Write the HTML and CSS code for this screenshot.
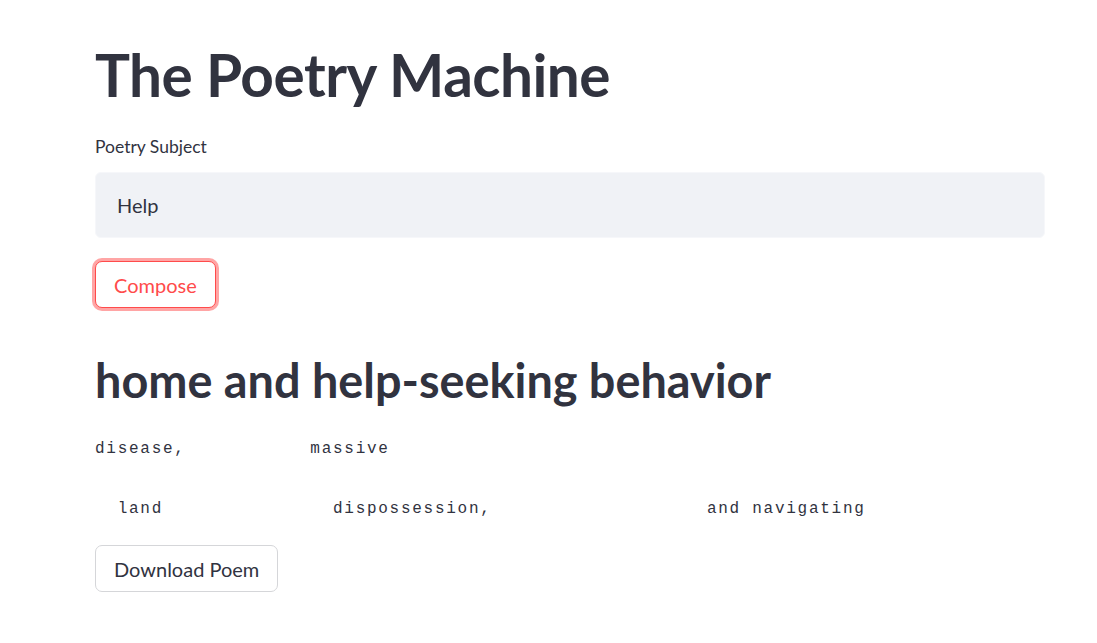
FILE: index.html
```html
<!DOCTYPE html>
<html>
<head>
<meta charset="utf-8">
<link rel="stylesheet" href="styles.css">
</head>
<body>
<main class="app">
  <h1 class="title">The Poetry Machine</h1>
  <div class="field">
    <label class="label">Poetry Subject</label>
    <div class="input">Help</div>
  </div>
  <div class="compose-row">
    <button class="btn btn-focus">Compose</button>
  </div>
  <h2 class="subtitle">home and help-seeking behavior</h2>
  <pre class="poem">disease,           massive

  land               dispossession,                   and navigating</pre>
  <div class="download-row">
    <button class="btn">Download Poem</button>
  </div>
</main>
</body>
</html>
```
FILE: styles.css
```css
html, body {
  margin: 0;
  padding: 0;
  background: #ffffff;
}
body {
  font-family: "Lato", "Open Sans", sans-serif;
  color: #31333f;
}
.app {
  padding: 41px 52px 0 95px;
  display: flex;
  flex-direction: column;
}
.title {
  margin: 0;
  font-size: 58.5px;
  font-weight: 700;
  line-height: 66px;
  color: #31333f;
  letter-spacing: -0.5px;
}
.field {
  margin-top: 28px;
  display: flex;
  flex-direction: column;
}
.label {
  font-size: 17.5px;
  line-height: 24px;
  color: #31333f;
  margin-bottom: 13px;
}
.input {
  height: 66px;
  box-sizing: border-box;
  background: #f0f2f6;
  border: 1px solid #f6f7fa;
  border-radius: 6px;
  padding: 0 21px;
  display: flex;
  align-items: center;
  font-size: 20px;
  color: #31333f;
}
.compose-row {
  margin-top: 23px;
  display: flex;
}
.btn {
  font-family: inherit;
  font-size: 20px;
  color: #31333f;
  background: #fff;
  border: 1px solid #d5d6d9;
  border-radius: 7px;
  height: 47px;
  padding: 0 18px;
  cursor: pointer;
}
.btn-focus {
  color: #ff4b4b;
  border-color: #ff4b4b;
  box-shadow: 0 0 0 3px rgba(255, 75, 75, 0.5);
}
.subtitle {
  margin: 44px 0 0 0;
  font-size: 46.8px;
  font-weight: 700;
  line-height: 56px;
  color: #31333f;
}
.poem {
  margin: 26px 0 0 0;
  font-family: "Liberation Mono", "DejaVu Sans Mono", monospace;
  font-size: 16px;
  letter-spacing: 1.73px;
  line-height: 30px;
  color: #31333f;
}
.download-row {
  margin-top: 21px;
  display: flex;
}
```
